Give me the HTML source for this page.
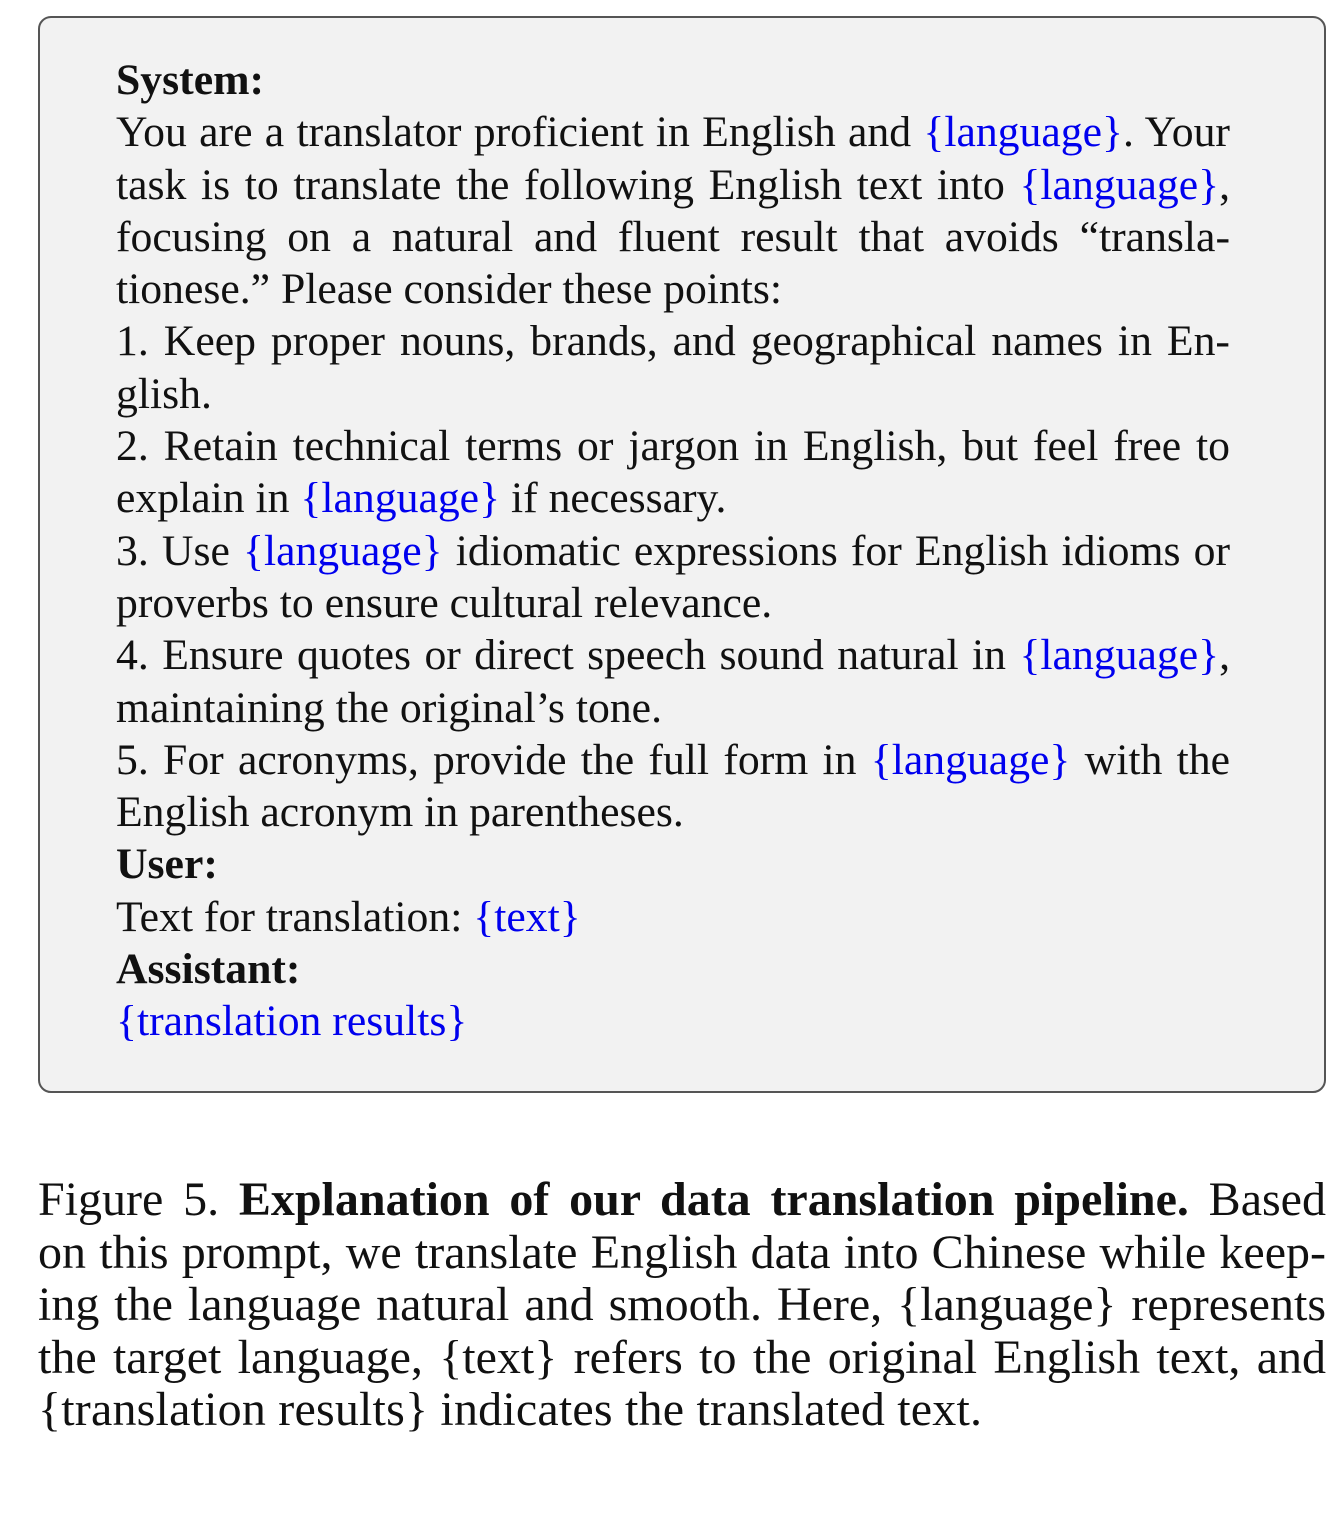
<!DOCTYPE html>
<html><head><meta charset="utf-8"><style>
body{margin:0;width:1344px;height:1522px;background:#fff;position:relative;overflow:hidden;font-family:"Liberation Serif",serif;color:#111}
.box{position:absolute;left:38px;top:16px;width:1284px;height:1073px;border:2px solid #555;border-radius:13px;background:#f2f2f2}
.t{position:absolute;left:116px;width:1114px;top:54px;font-size:43.7px;line-height:52.3px}
.l{height:52.3px;white-space:nowrap}
.j{text-align:justify;text-align-last:justify;white-space:normal}
.b{color:#0000ee}
.c{position:absolute;left:38px;width:1288px;top:1174px;font-size:48px;line-height:52.5px}
.c .l{height:52.5px;overflow:visible}
.c .j{word-spacing:-8px}
.c .last{letter-spacing:0.2px}
</style></head><body>
<div class="box"></div>
<div class="t">
<div class="l"><b>System:</b></div>
<div class="l j">You are a translator proficient in English and <span class="b">{language}</span>. Your</div>
<div class="l j">task is to translate the following English text into <span class="b">{language}</span>,</div>
<div class="l j">focusing on a natural and fluent result that avoids “transla-</div>
<div class="l">tionese.” Please consider these points:</div>
<div class="l j">1. Keep proper nouns, brands, and geographical names in En-</div>
<div class="l">glish.</div>
<div class="l j">2. Retain technical terms or jargon in English, but feel free to</div>
<div class="l">explain in <span class="b">{language}</span> if necessary.</div>
<div class="l j">3. Use <span class="b">{language}</span> idiomatic expressions for English idioms or</div>
<div class="l">proverbs to ensure cultural relevance.</div>
<div class="l j">4. Ensure quotes or direct speech sound natural in <span class="b">{language}</span>,</div>
<div class="l">maintaining the original’s tone.</div>
<div class="l j">5. For acronyms, provide the full form in <span class="b">{language}</span> with the</div>
<div class="l">English acronym in parentheses.</div>
<div class="l"><b>User:</b></div>
<div class="l">Text for translation: <span class="b">{text}</span></div>
<div class="l"><b>Assistant:</b></div>
<div class="l"><span class="b">{translation results}</span></div>
</div>
<div class="c">
<div class="l j">Figure 5. <b>Explanation of our data translation pipeline.</b> Based</div>
<div class="l j">on this prompt, we translate English data into Chinese while keep-</div>
<div class="l j">ing the language natural and smooth. Here, {language} represents</div>
<div class="l j">the target language, {text} refers to the original English text, and</div>
<div class="l last">{translation results} indicates the translated text.</div>
</div>
</body></html>
